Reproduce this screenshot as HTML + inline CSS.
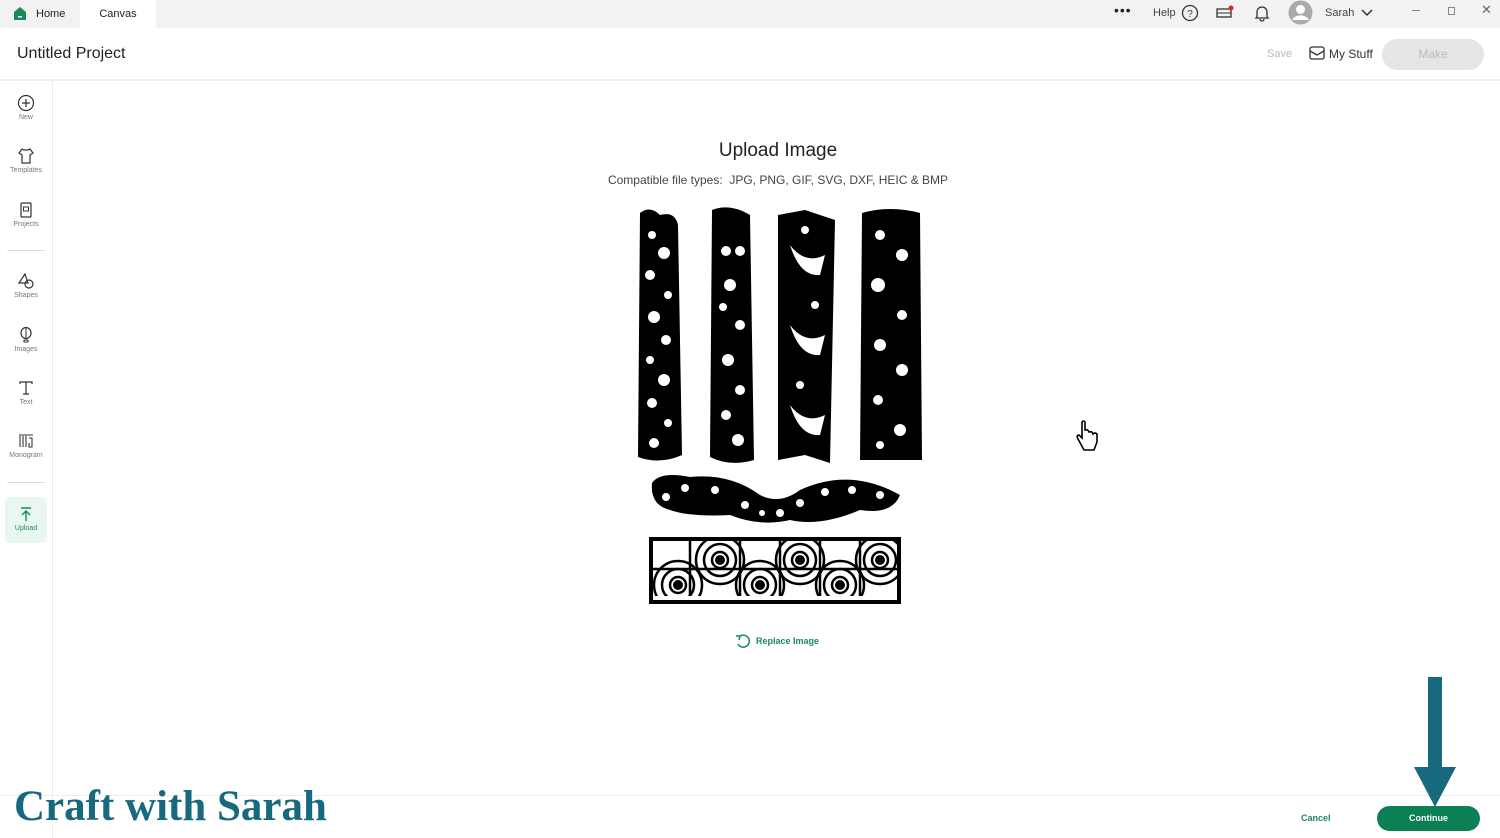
<!DOCTYPE html>
<html><head><meta charset="utf-8"><style>
*{margin:0;padding:0;box-sizing:border-box}
body{width:1500px;height:838px;overflow:hidden;background:#fff;font-family:"Liberation Sans",sans-serif;position:relative;color:#222}
.abs{position:absolute}
.top{left:0;top:0;width:1500px;height:28px;background:#f2f2f2}
.tab{top:0;left:80px;width:76px;height:28px;background:#fff;font-size:11px;line-height:28px;text-align:center}
.side{left:0;top:80px;width:53px;height:758px;border-right:1px solid #ececec}
.si{position:absolute;left:0;width:52px;text-align:center;font-size:7px;color:#777}
.si svg{display:block;margin:0 auto 2px}
</style></head><body>
<div class="abs top"></div>
<svg class="abs" style="left:13px;top:6px" width="14" height="15"><path d="M1 6 L7 1 L13 6 V14 H1Z" fill="#1a8a5a"/><rect x="5" y="10" width="4" height="1.5" fill="#fff"/></svg>
<div class="abs" style="left:36px;top:0;font-size:11px;line-height:28px">Home</div>
<div class="abs tab">Canvas</div>
<div class="abs" style="left:1114px;top:2px;font-size:14px;letter-spacing:1px">•••</div>
<div class="abs" style="left:1153px;top:7px;font-size:11px;color:#444">Help</div>
<svg class="abs" style="left:1181px;top:4px" width="18" height="18"><circle cx="9" cy="9" r="7.5" fill="none" stroke="#333" stroke-width="1.3"/><text x="9" y="13" font-size="10" text-anchor="middle" font-family="Liberation Sans" fill="#333">?</text></svg>
<svg class="abs" style="left:1216px;top:4px" width="18" height="16"><rect x="1" y="5" width="14" height="8" fill="none" stroke="#333" stroke-width="1.3"/><line x1="1" y1="9" x2="15" y2="9" stroke="#333"/><circle cx="15" cy="4" r="2.5" fill="#e0251b"/></svg>
<svg class="abs" style="left:1254px;top:4px" width="16" height="18"><path d="M3 13 V8 A5 5 0 0 1 13 8 V13 L14 14 H2Z M6 15 A2 2 0 0 0 10 15" fill="none" stroke="#333" stroke-width="1.3"/></svg>
<svg class="abs" style="left:1288px;top:0" width="25" height="25"><circle cx="12.5" cy="12.5" r="12" fill="#aaa"/><circle cx="12.5" cy="9.5" r="4.5" fill="#fff"/><path d="M4 20 A9 7 0 0 1 21 20" fill="#fff"/></svg>
<div class="abs" style="left:1325px;top:7px;font-size:11px;color:#444">Sarah</div>
<svg class="abs" style="left:1360px;top:8px" width="14" height="10"><path d="M2 2 L7 7 L12 2" fill="none" stroke="#333" stroke-width="1.5"/></svg>
<div class="abs" style="left:1412px;top:10px;width:8px;border-top:1px solid #888"></div>
<div class="abs" style="left:1448px;top:7px;width:7px;height:8px;border:1px solid #888"></div>
<div class="abs" style="left:1481px;top:2px;font-size:13px;color:#666">✕</div>

<div class="abs" style="left:17px;top:45px;font-size:16px;color:#222">Untitled Project</div>
<div class="abs" style="left:1267px;top:48px;font-size:11px;color:#bbb">Save</div>
<svg class="abs" style="left:1309px;top:46px" width="16" height="14"><rect x="1" y="1" width="14" height="12" rx="2" fill="none" stroke="#333" stroke-width="1.3"/><path d="M1 5 L8 9 L15 5" fill="none" stroke="#333" stroke-width="1.3"/></svg>
<div class="abs" style="left:1329px;top:47px;font-size:12px;color:#333">My Stuff</div>
<div class="abs" style="left:1382px;top:39px;width:102px;height:31px;border-radius:16px;background:#e5e5e5;color:#bbb;font-size:12px;text-align:center;line-height:31px">Make</div>
<div class="abs" style="left:0;top:79px;width:1500px;height:2px;background:#eee"></div>

<div class="abs side">
<div class="si" style="top:14px"><svg width="18" height="18"><circle cx="9" cy="9" r="7.5" fill="none" stroke="#333" stroke-width="1.2"/><path d="M9 5V13M5 9H13" stroke="#333" stroke-width="1.2"/></svg>New</div>
<div class="si" style="top:67px"><svg width="18" height="18"><path d="M5 2 L2 6 L5 8 V16 H13 V8 L16 6 L13 2 L11 3 H7Z" fill="none" stroke="#333" stroke-width="1.2"/></svg>Templates</div>
<div class="si" style="top:121px"><svg width="18" height="18"><rect x="4" y="2" width="10" height="14" rx="1" fill="none" stroke="#333" stroke-width="1.2"/><rect x="6.5" y="6" width="5" height="4" fill="none" stroke="#333"/></svg>Projects</div>
<div style="position:absolute;left:7px;top:170px;width:38px;border-top:1px solid #ddd"></div>
<div class="si" style="top:192px"><svg width="18" height="18"><path d="M8 2 L2 11 H11Z" fill="none" stroke="#333" stroke-width="1.2"/><circle cx="12" cy="12" r="4" fill="none" stroke="#333" stroke-width="1.2"/></svg>Shapes</div>
<div class="si" style="top:246px"><svg width="18" height="18"><ellipse cx="9" cy="7" rx="5" ry="5.5" fill="none" stroke="#333" stroke-width="1.2"/><path d="M9 2V12M7 14H11V16H7Z" fill="none" stroke="#333"/></svg>Images</div>
<div class="si" style="top:299px"><svg width="18" height="18"><path d="M3 5V3H15V5M9 3V15M6 15H12" fill="none" stroke="#333" stroke-width="1.2"/></svg>Text</div>
<div class="si" style="top:352px"><svg width="18" height="18"><path d="M2 3H16M3 4V15M6 4V15M9 4V15M12 6H15V15H12V11" fill="none" stroke="#333" stroke-width="1.1"/></svg>Monogram</div>
<div style="position:absolute;left:7px;top:402px;width:38px;border-top:1px solid #ddd"></div>
<div style="position:absolute;left:5px;top:417px;width:42px;height:46px;background:#eaf6f0;border-radius:5px"></div>
<div class="si" style="top:425px;color:#1a8a5a"><svg width="18" height="18"><path d="M4 3H14M9 16V6M5 10L9 6L13 10" fill="none" stroke="#1a8a5a" stroke-width="1.4"/></svg>Upload</div>
</div>

<div class="abs" style="left:0;top:140px;width:1556px;text-align:center;font-size:19px;color:#222">Upload Image</div>
<div class="abs" style="left:0;top:173px;width:1556px;text-align:center;font-size:12px;color:#444">Compatible file types:&nbsp; JPG, PNG, GIF, SVG, DXF, HEIC &amp; BMP</div>

<svg class="abs" style="left:630px;top:205px" width="300" height="400">
<defs><clipPath id="bx"><rect x="23" y="336" width="244" height="55"/></clipPath></defs>
<g fill="#000">
<path d="M10 8 Q20 0 30 10 Q45 6 48 20 L52 250 Q30 260 8 252 Z"/>
<path d="M82 5 Q100 -2 120 10 L124 255 Q100 262 80 252 Z"/>
<path d="M148 10 L175 5 L205 15 L200 258 L175 250 L148 255 Z"/>
<path d="M232 8 Q260 0 290 8 L292 255 L230 255 Z"/>
<path d="M22 278 Q30 266 60 272 Q100 268 130 290 Q150 300 170 285 Q220 262 270 290 Q262 310 230 305 Q190 322 160 315 Q130 322 100 310 Q60 312 40 305 Q20 300 22 278Z"/>
<rect x="19" y="332" width="252" height="67"/>
</g>
<g fill="#fff">
<circle cx="22" cy="30" r="4"/><circle cx="34" cy="48" r="6"/><circle cx="20" cy="70" r="5"/><circle cx="38" cy="90" r="4"/><circle cx="24" cy="112" r="6"/><circle cx="36" cy="135" r="5"/><circle cx="20" cy="155" r="4"/><circle cx="34" cy="175" r="6"/><circle cx="22" cy="198" r="5"/><circle cx="38" cy="218" r="4"/><circle cx="24" cy="238" r="5"/>
<circle cx="96" cy="46" r="5"/><circle cx="110" cy="46" r="5"/><circle cx="100" cy="80" r="6"/><circle cx="93" cy="102" r="4"/><circle cx="110" cy="120" r="5"/><circle cx="98" cy="155" r="6"/><circle cx="110" cy="185" r="5"/><circle cx="96" cy="210" r="5"/><circle cx="108" cy="235" r="6"/>
<path d="M160 40 Q175 60 195 50 L190 70 Q170 72 160 40Z"/><path d="M160 120 Q175 140 195 130 L190 150 Q170 152 160 120Z"/><path d="M160 200 Q175 220 195 210 L190 230 Q170 232 160 200Z"/><circle cx="175" cy="25" r="4"/><circle cx="185" cy="100" r="4"/><circle cx="170" cy="180" r="4"/>
<circle cx="250" cy="30" r="5"/><circle cx="272" cy="50" r="6"/><circle cx="248" cy="80" r="7"/><circle cx="272" cy="110" r="5"/><circle cx="250" cy="140" r="6"/><circle cx="272" cy="165" r="6"/><circle cx="248" cy="195" r="5"/><circle cx="270" cy="225" r="6"/><circle cx="250" cy="240" r="4"/>
<circle cx="36" cy="292" r="4"/><circle cx="55" cy="283" r="4"/><circle cx="85" cy="285" r="4"/><circle cx="115" cy="300" r="4"/><circle cx="132" cy="308" r="3"/><circle cx="150" cy="308" r="4"/><circle cx="170" cy="298" r="4"/><circle cx="195" cy="287" r="4"/><circle cx="222" cy="285" r="4"/><circle cx="250" cy="290" r="4"/>
<rect x="23" y="336" width="244" height="59"/>
</g>
<g fill="none" stroke="#000" stroke-width="2.5" clip-path="url(#bx)">
<circle cx="48" cy="380" r="8"/><circle cx="48" cy="380" r="16"/><circle cx="48" cy="380" r="24"/><circle cx="90" cy="355" r="8"/><circle cx="90" cy="355" r="16"/><circle cx="90" cy="355" r="24"/><circle cx="130" cy="380" r="8"/><circle cx="130" cy="380" r="16"/><circle cx="130" cy="380" r="24"/><circle cx="170" cy="355" r="8"/><circle cx="170" cy="355" r="16"/><circle cx="170" cy="355" r="24"/><circle cx="210" cy="380" r="8"/><circle cx="210" cy="380" r="16"/><circle cx="210" cy="380" r="24"/><circle cx="250" cy="355" r="8"/><circle cx="250" cy="355" r="16"/><circle cx="250" cy="355" r="24"/>
<path d="M23 364H267M60 336V395M110 336V395M150 336V395M190 336V395M230 336V395"/>
</g>
<g fill="#000"><circle cx="48" cy="380" r="5"/><circle cx="90" cy="355" r="5"/><circle cx="130" cy="380" r="5"/><circle cx="170" cy="355" r="5"/><circle cx="210" cy="380" r="5"/><circle cx="250" cy="355" r="5"/></g>
</svg>

<svg class="abs" style="left:734px;top:633px" width="18" height="16"><path d="M5 4 A6 6 0 1 1 4 11" fill="none" stroke="#1a8a5a" stroke-width="1.5"/><path d="M2 3 L6 3 L5 7" fill="none" stroke="#1a8a5a" stroke-width="1.5"/></svg>
<div class="abs" style="left:756px;top:636px;font-size:9px;color:#1a8a5a;font-weight:bold">Replace Image</div>

<svg class="abs" style="left:1074px;top:420px" width="26" height="34"><path d="M8 2 V18 L5 15 Q2 15 4 19 L10 30 H20 L23 22 V14 Q21 12 19 14 Q18 11 15 12 Q14 9 11 10 V2 Q9.5 0 8 2Z" fill="#fff" stroke="#000" stroke-width="1.6"/></svg>

<div class="abs" style="left:0;top:795px;width:1500px;border-top:1px solid #eee"></div>
<div class="abs" style="left:1301px;top:813px;font-size:9px;color:#1a8a5a;font-weight:bold">Cancel</div>
<div class="abs" style="left:1377px;top:806px;width:103px;height:25px;border-radius:13px;background:#0d7f55;color:#fff;font-size:9px;font-weight:bold;text-align:center;line-height:25px">Continue</div>
<div class="abs" style="left:1428px;top:677px;width:14px;height:92px;background:#176a7d"></div>
<svg class="abs" style="left:1414px;top:767px" width="42" height="40"><path d="M0 0 H42 L21 40Z" fill="#176a7d"/></svg>

<div class="abs" style="left:14px;top:781px;font-family:'Liberation Serif',serif;font-weight:bold;font-size:43px;color:#176a7d;letter-spacing:0px;line-height:52px">Craft with Sarah</div>
</body></html>
